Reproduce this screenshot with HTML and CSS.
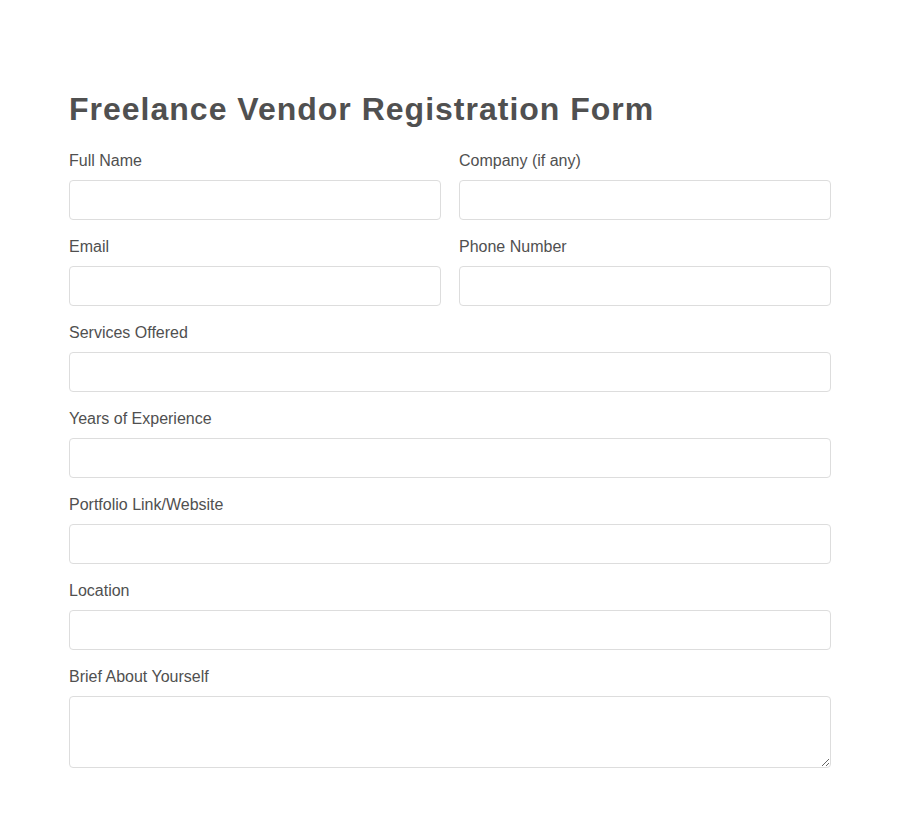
FILE: index.html
```html
<!DOCTYPE html>
<html lang="en">
<head>
<meta charset="utf-8">
<title>Freelance Vendor Registration Form</title>
<link rel="stylesheet" href="styles.css">
</head>
<body>
<div class="container">
  <h1 class="title">Freelance Vendor Registration Form</h1>
  <form class="form">
    <div class="row">
      <div class="group">
        <label class="label" for="name">Full Name</label>
        <input class="input" id="name" type="text">
      </div>
      <div class="group">
        <label class="label" for="company">Company (if any)</label>
        <input class="input" id="company" type="text">
      </div>
    </div>
    <div class="row">
      <div class="group">
        <label class="label" for="email">Email</label>
        <input class="input" id="email" type="email">
      </div>
      <div class="group">
        <label class="label" for="phone">Phone Number</label>
        <input class="input" id="phone" type="tel">
      </div>
    </div>
    <div class="group">
      <label class="label" for="services">Services Offered</label>
      <input class="input" id="services" type="text">
    </div>
    <div class="group">
      <label class="label" for="years">Years of Experience</label>
      <input class="input" id="years" type="text">
    </div>
    <div class="group">
      <label class="label" for="portfolio">Portfolio Link/Website</label>
      <input class="input" id="portfolio" type="text">
    </div>
    <div class="group">
      <label class="label" for="location">Location</label>
      <input class="input" id="location" type="text">
    </div>
    <div class="group">
      <label class="label" for="about">Brief About Yourself</label>
      <textarea class="input textarea" id="about"></textarea>
    </div>
  </form>
</div>
</body>
</html>
```
FILE: styles.css
```css
* { box-sizing: border-box; }
html, body { margin: 0; padding: 0; background: #fff; }
body {
  font-family: "Liberation Sans", Arial, sans-serif;
  color: #555;
}
.container {
  width: 762px;
  margin: 0 auto;
  padding-top: 91px;
}
.title {
  margin: 0 0 24px;
  font-size: 32px;
  font-weight: bold;
  letter-spacing: 1px;
  line-height: 37px;
  color: #505050;
}
.row {
  display: grid;
  grid-template-columns: 1fr 1fr;
  column-gap: 18px;
}
.group {
  margin-bottom: 18px;
}
.label {
  display: block;
  font-size: 16px;
  line-height: 18px;
  margin-bottom: 10px;
  color: #505050;
}
.input {
  display: block;
  width: 100%;
  height: 40px;
  border: 1px solid #ddd;
  border-radius: 4px;
  background: #fff;
  padding: 8px 10px;
  font-family: inherit;
  font-size: 16px;
  margin: 0;
}
.textarea {
  height: 72px;
  resize: vertical;
}
```
